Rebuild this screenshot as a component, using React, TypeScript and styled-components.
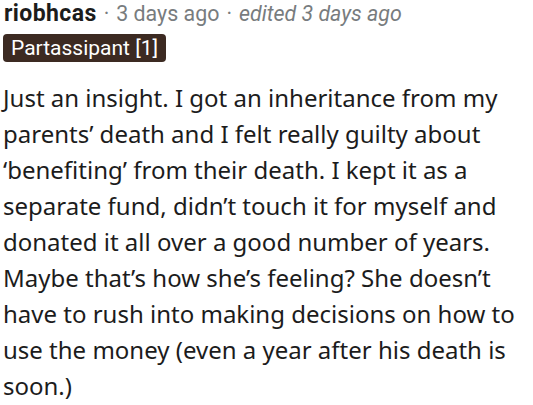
import React from "react";
import styled, { createGlobalStyle } from "styled-components";

const Global = createGlobalStyle`
  html, body { margin: 0; padding: 0; background: #ffffff; }
`;

const Comment = styled.div`
  display: flex;
  flex-direction: column;
  align-items: flex-start;
  padding: 0 0 0 3px;
  width: 533px;
  box-sizing: border-box;
`;

const Meta = styled.div`
  display: flex;
  align-items: baseline;
  padding-left: 1px;
  font-family: Roboto, "Liberation Sans", sans-serif;
  font-size: 21.4px;
  line-height: 28px;
  color: #787c7e;
  white-space: nowrap;
`;

const Author = styled.span`
  font-weight: 700;
  font-size: 23px;
  letter-spacing: 0.4px;
  color: #1c1c1c;
`;

const Dot = styled.span`
  margin: 0 7px;
`;

const Edited = styled.span`
  font-style: italic;
`;

const Flair = styled.span`
  margin-top: 6px;
  display: inline-flex;
  align-items: center;
  height: 28px;
  padding: 0 8px;
  border-radius: 4px;
  background: #3c2a22;
  color: #ffffff;
  font-family: Roboto, "Liberation Sans", sans-serif;
  font-size: 21px;
`;

const Body = styled.p`
  margin: 18px 0 0;
  font-family: "Noto Sans", "Open Sans", sans-serif;
  font-size: 24px;
  line-height: 36px;
  color: #1c1c1c;
`;

export default function App() {
  return (
    <>
      <Global />
      <Comment>
        <Meta>
          <Author>riobhcas</Author>
          <Dot>·</Dot>
          <span>3 days ago</span>
          <Dot>·</Dot>
          <Edited>edited 3 days ago</Edited>
        </Meta>
        <Flair>Partassipant [1]</Flair>
        <Body>
          Just an insight. I got an inheritance from my parents’ death and I felt really guilty about ‘benefiting’ from their death. I kept it as a separate fund, didn’t touch it for myself and donated it all over a good number of years. Maybe that’s how she’s feeling? She doesn’t have to rush into making decisions on how to use the money (even a year after his death is soon.)
        </Body>
      </Comment>
    </>
  );
}
